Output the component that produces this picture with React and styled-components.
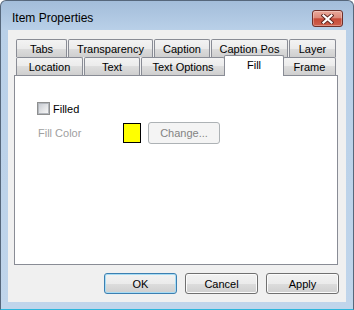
import React from "react";
import styled, { createGlobalStyle } from "styled-components";

const GlobalStyle = createGlobalStyle`
  html, body { margin: 0; padding: 0; background: #ffffff; }
  body { font-family: "Liberation Sans", Arial, sans-serif; font-size: 11px; color: #000; }
  * { box-sizing: border-box; }
`;

const Window = styled.div`
  width: 354px;
  height: 310px;
  display: flex;
  flex-direction: column;
  padding: 0 7px 7px;
  border: 1px solid #56677b;
  border-bottom-color: #2cb6dc;
  border-radius: 6px 6px 0 0;
  background: linear-gradient(to bottom, #a3bdda 0, #b9d0e8 29px, #c0d5eb 100%);
  overflow: hidden;
`;

const TitleBar = styled.div`
  height: 29px;
  display: flex;
  align-items: flex-start;
  padding-top: 9px;
`;

const Title = styled.div`
  margin-left: 4px;
  font-size: 12px;
  line-height: 16px;
  color: #000;
`;

const CloseButton = styled.div`
  margin-left: auto;
  margin-right: 3px;
  width: 31px;
  height: 17px;
  border: 1px solid #6e2f29;
  border-radius: 3px;
  background: linear-gradient(to bottom, #eaa99b 0%, #dc8a7a 45%, #c64a37 52%, #cf604c 100%);
  box-shadow: inset 0 0 0 1px rgba(255, 255, 255, 0.3);
  display: flex;
  align-items: center;
  justify-content: center;
`;

const Client = styled.div`
  flex: 1;
  background: #f0f0f0;
  display: flex;
  flex-direction: column;
  padding: 9px 0 8px;
`;

const TabStrip = styled.div`
  margin-left: 8px;
  width: 320px;
  display: flex;
  flex-direction: column;
`;

const TabRow = styled.div`
  height: 18px;
  display: flex;
  gap: 1px;
  align-items: flex-end;
`;

const Tab = styled.div`
  flex: none;
  width: ${(p) => (p.$selected ? p.$w + 4 : p.$w)}px;
  height: ${(p) => (p.$selected ? 21 : 18)}px;
  margin: ${(p) => (p.$selected ? "-2px -2px -1px" : "0")};
  padding: ${(p) => (p.$selected ? "0 0 3px" : "1px 0 0")};
  border: 1px solid #898c95;
  border-bottom: none;
  border-radius: 2px 2px 0 0;
  background: ${(p) =>
    p.$selected
      ? "#ffffff"
      : "linear-gradient(to bottom, #f3f3f3 0%, #ebebeb 50%, #dddddd 50%, #cfcfcf 100%)"};
  position: relative;
  z-index: ${(p) => (p.$selected ? 1 : 0)};
  display: flex;
  align-items: center;
  justify-content: center;
  white-space: nowrap;
`;

const Panel = styled.div`
  margin-left: 6px;
  width: 324px;
  height: 190px;
  border: 1px solid #898c95;
  background: #ffffff;
  padding: 26px 0 0 22px;
  display: flex;
  flex-direction: column;
`;

const CheckRow = styled.label`
  display: flex;
  align-items: center;
  gap: 3px;
  height: 13px;
`;

const CheckBox = styled.span`
  width: 13px;
  height: 13px;
  border: 1px solid #8e8f8f;
  background: #f4f4f4;
  display: flex;
  align-items: center;
  justify-content: center;

  &::after {
    content: "";
    width: 9px;
    height: 9px;
    border: 1px solid #b3b7bd;
    background: linear-gradient(135deg, #c9cdd3 0%, #e6e7e9 60%, #f7f7f7 100%);
  }
`;

const FieldRow = styled.div`
  margin-top: 7px;
  display: flex;
  align-items: flex-start;
`;

const Label = styled.div`
  width: 86px;
  padding-left: 1px;
  line-height: 22px;
  color: #a0a0a0;
`;

const Swatch = styled.div`
  width: 18px;
  height: 20px;
  margin-top: 1px;
  border: 1px solid #000;
  background: ${(p) => p.$color};
`;

const Button = styled.div`
  width: ${(p) => p.$w}px;
  height: ${(p) => p.$h}px;
  margin-left: ${(p) => p.$ml || 0}px;
  border-radius: 3px;
  display: flex;
  align-items: center;
  justify-content: center;
  border: 1px solid ${(p) => (p.$disabled ? "#adb2b5" : p.$default ? "#3c7fb1" : "#707070")};
  color: ${(p) => (p.$disabled ? "#838383" : "#000")};
  background: ${(p) =>
    p.$disabled
      ? "#f4f4f4"
      : "linear-gradient(to bottom, #f2f2f2 0%, #ebebeb 50%, #dddddd 50%, #cfcfcf 100%)"};
  box-shadow: ${(p) =>
    p.$disabled ? "none" : p.$default ? "inset 0 0 0 1px #a8dcf4" : "inset 0 0 0 1px #fbfbfb"};
`;

const ButtonRow = styled.div`
  margin-top: 8px;
  display: flex;
  justify-content: flex-end;
  gap: 8px;
  padding-right: 7px;
`;

const topTabs = [
  { label: "Tabs", w: 51 },
  { label: "Transparency", w: 85 },
  { label: "Caption", w: 56 },
  { label: "Caption Pos", w: 77 },
  { label: "Layer", w: 47 },
];

const frontTabs = [
  { label: "Location", w: 67 },
  { label: "Text", w: 56 },
  { label: "Text Options", w: 84 },
  { label: "Fill", w: 56, selected: true },
  { label: "Frame", w: 53 },
];

const CloseGlyph = () => (
  <svg width="13" height="10" viewBox="0 0 13 10">
    <path d="M2.5 1.5 L10.5 8.5 M10.5 1.5 L2.5 8.5" stroke="#5c2520" strokeWidth="4" strokeLinecap="square" fill="none" />
    <path d="M2.5 1.5 L10.5 8.5 M10.5 1.5 L2.5 8.5" stroke="#ffffff" strokeWidth="2.2" strokeLinecap="square" fill="none" />
  </svg>
);

export default function App() {
  return (
    <>
      <GlobalStyle />
      <Window>
        <TitleBar>
          <Title>Item Properties</Title>
          <CloseButton>
            <CloseGlyph />
          </CloseButton>
        </TitleBar>
        <Client>
          <TabStrip>
            <TabRow>
              {topTabs.map((t) => (
                <Tab key={t.label} $w={t.w}>{t.label}</Tab>
              ))}
            </TabRow>
            <TabRow>
              {frontTabs.map((t) => (
                <Tab key={t.label} $w={t.w} $selected={t.selected}>{t.label}</Tab>
              ))}
            </TabRow>
          </TabStrip>
          <Panel>
            <CheckRow>
              <CheckBox />
              <span>Filled</span>
            </CheckRow>
            <FieldRow>
              <Label>Fill Color</Label>
              <Swatch $color="#ffff00" />
              <Button $w={72} $h={22} $ml={7} $disabled>Change...</Button>
            </FieldRow>
          </Panel>
          <ButtonRow>
            <Button $w={73} $h={21} $default>OK</Button>
            <Button $w={73} $h={21}>Cancel</Button>
            <Button $w={73} $h={21}>Apply</Button>
          </ButtonRow>
        </Client>
      </Window>
    </>
  );
}
